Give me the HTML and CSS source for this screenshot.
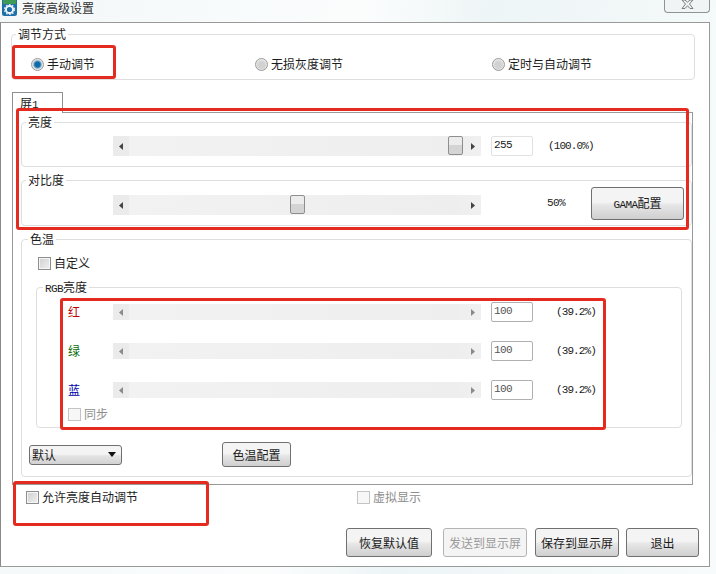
FILE: index.html
```html
<!DOCTYPE html>
<html lang="zh-CN">
<head>
<meta charset="utf-8">
<title>亮度高级设置</title>
<link rel="stylesheet" href="styles.css">
</head>
<body>
<div class="app">
  <header class="titlebar">
    <svg class="app-icon" width="15" height="16" viewBox="0 0 15 16">
      <rect x="0" y="-2" width="15" height="18" rx="2.5" fill="#1f6fa8"/>
      <rect x="1" y="-1" width="13" height="5" fill="#3f9a55"/>
      <circle cx="7.5" cy="9.5" r="3.6" fill="none" stroke="#f2f6f8" stroke-width="2"/>
      <circle cx="7.5" cy="9.5" r="5" fill="none" stroke="#dfe9ee" stroke-width="1.2" stroke-dasharray="1.6 1.6"/>
    </svg>
    <span class="title-text">亮度高级设置</span>
    <div class="close">
      <svg width="13" height="9" viewBox="0 0 13 9"><path d="M1 0 L4 0 L6.5 2.2 L9 0 L12 0 L8.5 4 L12 8.5 L9 8.5 L6.5 5.8 L4 8.5 L1 8.5 L4.5 4 Z" fill="#eef2f3" stroke="#7b7f83" stroke-width="1"/></svg>
    </div>
  </header>

  <main class="window">
    <fieldset class="group mode">
      <legend class="legend-mode">调节方式</legend>
      <div class="mode-row">
        <label class="opt"><span class="radio on"></span>手动调节</label>
        <label class="opt"><span class="radio"></span>无损灰度调节</label>
        <label class="opt"><span class="radio"></span>定时与自动调节</label>
      </div>
    </fieldset>

    <div class="tab">屏<span class="lat">1</span></div>
    <section class="panel">
      <fieldset class="group bright">
        <legend class="legend-a">亮度</legend>
        <div class="row">
          <div class="slider tall">
            <svg class="arr" width="4" height="7" viewBox="0 0 4 7"><path d="M4 0 L0 3.5 L4 7 Z" fill="#444"/></svg>
            <svg class="arr" width="4" height="7" viewBox="0 0 4 7"><path d="M0 0 L4 3.5 L0 7 Z" fill="#444"/></svg>
            <span class="thumb thumb-max"></span>
          </div>
          <div class="num active lat">255</div>
          <span class="pct lat">(100.0%)</span>
        </div>
      </fieldset>

      <fieldset class="group contrast">
        <legend class="legend-a">对比度</legend>
        <div class="row top">
          <div class="slider tall nudge">
            <svg class="arr" width="4" height="7" viewBox="0 0 4 7"><path d="M4 0 L0 3.5 L4 7 Z" fill="#444"/></svg>
            <svg class="arr" width="4" height="7" viewBox="0 0 4 7"><path d="M0 0 L4 3.5 L0 7 Z" fill="#444"/></svg>
            <span class="thumb thumb-mid"></span>
          </div>
          <span class="fifty lat">50%</span>
          <button class="btn gama"><span class="lat">GAMA</span>配置</button>
        </div>
      </fieldset>

      <fieldset class="group temp">
        <legend class="legend-b">色温</legend>
        <label class="check-row custom"><span class="check"></span>自定义</label>
        <fieldset class="group rgb">
          <legend class="legend-rgb"><span class="lat">RGB</span>亮度</legend>
          <div class="rgb-rows">
            <div class="rgb-row">
              <span class="ch red">红</span>
              <div class="slider short">
                <svg class="arr" width="4" height="7" viewBox="0 0 4 7"><path d="M4 0 L0 3.5 L4 7 Z" fill="#8a8a8a"/></svg>
                <svg class="arr" width="4" height="7" viewBox="0 0 4 7"><path d="M0 0 L4 3.5 L0 7 Z" fill="#8a8a8a"/></svg>
              </div>
              <div class="num lat">100</div>
              <span class="pct wide lat">(39.2%)</span>
            </div>
            <div class="rgb-row">
              <span class="ch green">绿</span>
              <div class="slider short">
                <svg class="arr" width="4" height="7" viewBox="0 0 4 7"><path d="M4 0 L0 3.5 L4 7 Z" fill="#8a8a8a"/></svg>
                <svg class="arr" width="4" height="7" viewBox="0 0 4 7"><path d="M0 0 L4 3.5 L0 7 Z" fill="#8a8a8a"/></svg>
              </div>
              <div class="num lat">100</div>
              <span class="pct wide lat">(39.2%)</span>
            </div>
            <div class="rgb-row">
              <span class="ch blue">蓝</span>
              <div class="slider short">
                <svg class="arr" width="4" height="7" viewBox="0 0 4 7"><path d="M4 0 L0 3.5 L4 7 Z" fill="#8a8a8a"/></svg>
                <svg class="arr" width="4" height="7" viewBox="0 0 4 7"><path d="M0 0 L4 3.5 L0 7 Z" fill="#8a8a8a"/></svg>
              </div>
              <div class="num lat">100</div>
              <span class="pct wide lat">(39.2%)</span>
            </div>
          </div>
          <label class="check-row sync disabled"><span class="check off"></span>同步</label>
        </fieldset>
        <div class="temp-actions">
          <div class="select">默认<svg width="8" height="5" viewBox="0 0 8 5"><path d="M0 0 H8 L4 5 Z" fill="#111"/></svg></div>
          <button class="btn temp-btn">色温配置</button>
        </div>
      </fieldset>
    </section>

    <div class="below">
      <label class="check-row"><span class="check"></span>允许亮度自动调节</label>
      <label class="check-row disabled"><span class="check off"></span>虚拟显示</label>
    </div>

    <footer class="actions">
      <button class="btn w86">恢复默认值</button>
      <button class="btn w84 dim">发送到显示屏</button>
      <button class="btn w84">保存到显示屏</button>
      <button class="btn w73">退出</button>
    </footer>
  </main>

  <div class="mark m1"></div>
  <div class="mark m2"></div>
  <div class="mark m3"></div>
  <div class="mark m4"></div>
</div>
</body>
</html>
```

FILE: styles.css
```css
* { box-sizing: border-box; }
html, body { margin: 0; padding: 0; }
body {
  width: 716px;
  height: 574px;
  overflow: hidden;
  font-family: "Noto Sans CJK SC", sans-serif;
  font-size: 12px;
  line-height: 14px;
  color: #1c1c1c;
}
.app {
  position: relative;
  width: 716px;
  height: 574px;
  background: linear-gradient(100deg, #f3f7f8 0%, #fbfdfd 45%, #eef5f6 60%, #f7fbfb 100%);
}
.lat {
  font-family: "Liberation Mono", monospace;
  font-size: 11px;
  letter-spacing: -0.6px;
  line-height: 1;
}

.titlebar {
  height: 22px;
  display: flex;
  align-items: flex-start;
  padding-left: 2px;
}
.app-icon { flex: none; }
.title-text { margin-left: 5px; color: #333; line-height: 15px; }
.close {
  margin-left: auto;
  margin-right: 6px;
  width: 46px;
  height: 13px;
  border: 1px solid #8f9396;
  border-top: 0;
  border-radius: 0 0 4px 4px;
  background: #f0f4f5;
  display: flex;
  justify-content: center;
}

.window {
  width: 710px;
  height: 545px;
  background: #fff;
  border: 1px solid #999;
  border-left-color: #8a8a8a;
  padding-top: 4px;
}

.group {
  margin: 0;
  padding: 0;
  min-width: 0;
  border: 1px solid #dedede;
  border-radius: 4px;
}
.group legend { padding: 0 2px; height: 14px; line-height: 14px; }
.legend-mode { margin-left: 4px; }
.legend-a { margin-left: 4px; }
.legend-b { margin-left: 6px; }
.legend-rgb { margin-left: 6px; }

.mode { margin-left: 10px; width: 684px; height: 53px; }
.mode-row {
  display: grid;
  grid-template-columns: 224px 237px 1fr;
  padding: 13px 0 0 19px;
}
.opt { display: flex; align-items: center; height: 20px; white-space: nowrap; }
.radio {
  width: 13px;
  height: 13px;
  margin-right: 3px;
  border-radius: 50%;
  border: 1px solid #9a9a9a;
  background: radial-gradient(circle at 50% 55%, #d2d2d2 0 40%, #efefef 75%);
  flex: none;
}
.radio.on { background: radial-gradient(circle, #0f6aa8 0 30%, #5a9bc4 45%, #e4e4e4 60%); }

.tab {
  position: relative;
  z-index: 1;
  margin: 12px 0 -1px 11px;
  width: 51px;
  height: 21px;
  padding: 2px 0 0 7px;
  border: 1px solid #8f8f8f;
  border-bottom: 0;
  background: #fff;
  line-height: 15px;
}
.panel {
  margin-left: 11px;
  width: 681px;
  border: 1px solid #999;
  padding: 2px 0 7px 8px;
}

.bright, .contrast, .temp { width: 671px; }
.contrast, .temp { margin-top: 6px; }
.bright { height: 52px; }
.contrast { height: 53px; }
.temp { height: 245px; }

.row { display: flex; align-items: center; padding: 7px 0 0 91px; }
.row.top { align-items: flex-start; padding-top: 0; }
.nudge { margin-top: 8px; }

.slider {
  position: relative;
  width: 368px;
  background: linear-gradient(to right, #ebebeb 0 16px, #f2f2f2 16px, #eeeeee 340px, #f0f0f0 100%);
  display: flex;
  align-items: center;
  justify-content: space-between;
  padding: 0 6px;
  flex: none;
}
.slider.tall { height: 20px; }
.slider.short { height: 16px; }
.thumb {
  position: absolute;
  top: 0;
  width: 15px;
  height: 19px;
  border: 1px solid #8e8e8e;
  border-radius: 2px;
  background: linear-gradient(#ececec 0 45%, #d4d4d4 45% 100%);
}
.thumb-max { left: 335px; }
.thumb-mid { left: 177px; }

.num {
  width: 42px;
  height: 20px;
  margin-left: 10px;
  padding-left: 2px;
  border: 1px solid #b0b0b0;
  border-radius: 2px;
  line-height: 16px;
  color: #555;
  background: #fff;
  flex: none;
}
.num.active { border-color: #e2e2e2; color: #222; }
.pct { margin: 1px 0 0 15px; white-space: nowrap; letter-spacing: -0.9px; }
.pct.wide { margin: 0 0 0 23px; }
.fifty { width: 44px; margin: 11px 0 0 66px; }

.btn {
  padding: 0;
  font: inherit;
  color: #1c1c1c;
  border: 1px solid #707070;
  border-radius: 3px;
  background: linear-gradient(#f4f4f4 0 45%, #e6e6e6 55%, #cfcfcf 100%);
  white-space: nowrap;
}
.gama { width: 93px; height: 33px; }
.temp-btn { width: 69px; height: 25px; margin-left: 100px; }
.w86 { width: 86px; }
.w84 { width: 84px; }
.w73 { width: 73px; }
.dim {
  color: #9a9a9a;
  border-color: #b4b4b4;
  background: #f4f4f4;
}

.check-row { display: flex; align-items: center; height: 14px; white-space: nowrap; }
.check {
  width: 13px;
  height: 13px;
  margin-right: 3px;
  border: 1px solid #8e8e8e;
  background: linear-gradient(135deg, #d0d0d0, #f0f0f0);
  box-shadow: inset 0 0 0 1px #f5f5f5;
  flex: none;
}
.check.off { border-color: #c4c4c4; background: #f7f7f7; box-shadow: none; }
.disabled { color: #8d8d8d; }
.custom { margin: 10px 0 0 16px; }

.rgb { margin: 10px 0 0 14px; width: 646px; height: 148px; }
.rgb-rows { display: grid; grid-auto-rows: 20px; row-gap: 19px; padding: 8px 0 0 31px; }
.rgb-row { display: flex; align-items: center; }
.ch { width: 45px; flex: none; }
.red { color: #c00000; }
.green { color: #0a6e0a; }
.blue { color: #0000a8; }
.sync { margin: 7px 0 0 31px; }

.temp-actions { display: flex; align-items: center; margin: 14px 0 0 7px; }
.select {
  width: 93px;
  height: 20px;
  padding: 0 5px 0 2px;
  display: flex;
  align-items: center;
  justify-content: space-between;
  border: 1px solid #707070;
  border-radius: 3px;
  background: linear-gradient(#f4f4f4 0 45%, #e4e4e4 55%, #d2d2d2 100%);
}

.below {
  display: grid;
  grid-template-columns: 331px 1fr;
  margin-top: 5px;
  padding-left: 25px;
}
.actions {
  display: flex;
  height: 29px;
  margin: 24px 0 0 345px;
}
.actions .w84:nth-child(2) { margin-left: 11px; }
.actions .w84:nth-child(3) { margin-left: 8px; }
.actions .w73 { margin-left: 7px; }

.mark {
  position: absolute;
  border: 3px solid #e52b20;
  border-radius: 3px;
  pointer-events: none;
  z-index: 2;
}
.m1 { left: 12px; top: 45px; width: 104px; height: 34px; }
.m2 { left: 16px; top: 108px; width: 673px; height: 122px; }
.m3 { left: 60px; top: 298px; width: 546px; height: 132px; }
.m4 { left: 13px; top: 481px; width: 196px; height: 45px; }
```
